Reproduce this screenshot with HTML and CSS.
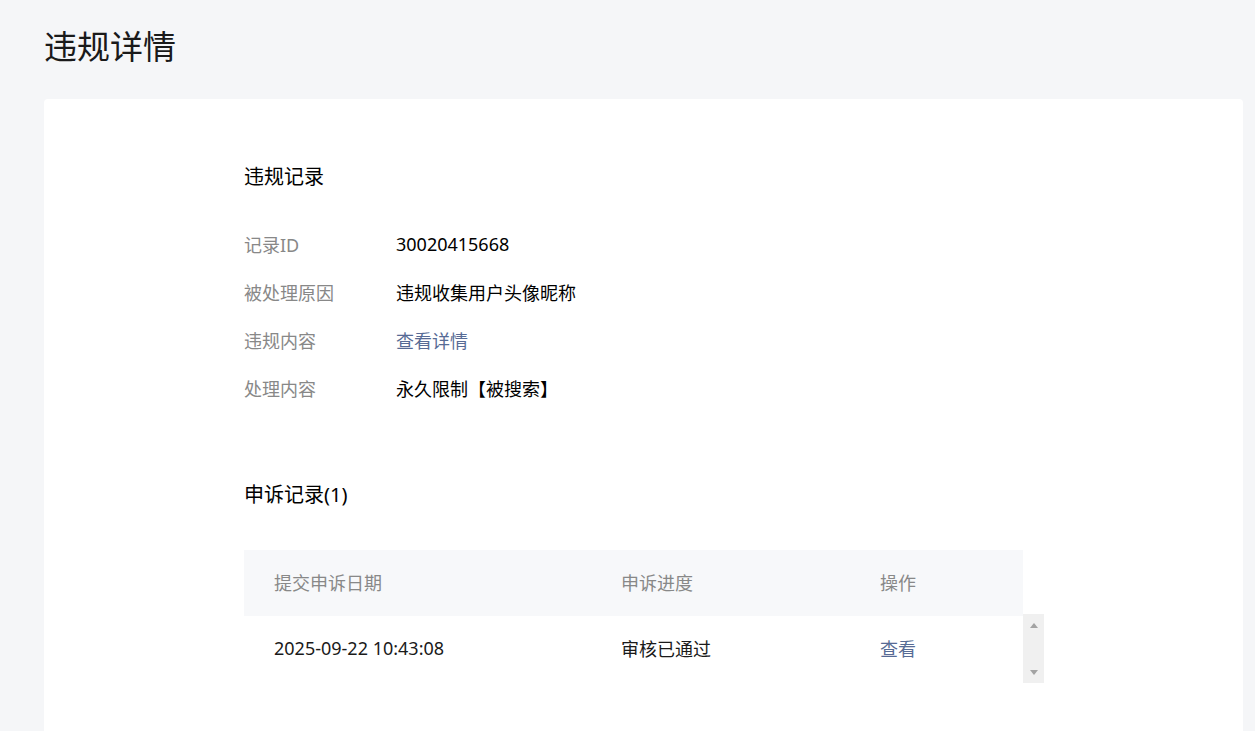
FILE: index.html
```html
<!DOCTYPE html>
<html lang="zh-CN">
<head>
<meta charset="utf-8">
<title>违规详情</title>
<link rel="stylesheet" href="styles.css">
</head>
<body>
<div class="page">
  <h1 class="page-title">违规详情</h1>
  <div class="card">
    <div class="content">
      <h2 class="section-title">违规记录</h2>
      <div class="info-list">
        <div class="info-row"><span class="info-label">记录ID</span><span class="info-value">30020415668</span></div>
        <div class="info-row"><span class="info-label">被处理原因</span><span class="info-value">违规收集用户头像昵称</span></div>
        <div class="info-row"><span class="info-label">违规内容</span><a class="info-value link" href="#">查看详情</a></div>
        <div class="info-row"><span class="info-label">处理内容</span><span class="info-value">永久限制【被搜索】</span></div>
      </div>
      <h2 class="section-title appeal-title">申诉记录(1)</h2>
      <div class="table">
        <div class="table-head">
          <span class="cell">提交申诉日期</span>
          <span class="cell">申诉进度</span>
          <span class="cell">操作</span>
        </div>
        <div class="table-body-wrap">
          <div class="table-body">
            <div class="table-row">
              <span class="cell">2025-09-22 10:43:08</span>
              <span class="cell">审核已通过</span>
              <a class="cell link" href="#">查看</a>
            </div>
          </div>
          <div class="scrollbar">
            <span class="arrow arrow-up"></span>
            <span class="arrow arrow-down"></span>
          </div>
        </div>
      </div>
    </div>
  </div>
</div>
</body>
</html>
```
FILE: styles.css
```css
html, body {
  margin: 0;
  padding: 0;
  background: #f5f6f8;
  height: 100%;
  overflow: hidden;
}
body {
  font-family: "Noto Sans", "Noto Sans CJK SC", sans-serif;
  color: #000;
}
.page {
  padding: 25px 12px 0 44px;
  height: 100%;
  box-sizing: border-box;
  display: flex;
  flex-direction: column;
}
.page-title {
  margin: 0 0 30px 0;
  font-size: 33px;
  line-height: 44px;
  font-weight: 400;
  color: #1a1a1a;
}
.card {
  flex: 1;
  background: #fff;
  border-radius: 4px 4px 0 0;
  padding: 64px 0 0 200px;
}
.content {
  width: 800px;
}
.section-title {
  margin: 0;
  font-size: 20px;
  line-height: 28px;
  font-weight: 400;
  color: #000;
}
.info-list {
  margin-top: 29px;
}
.info-row {
  display: flex;
  height: 48px;
  align-items: center;
  font-size: 18px;
}
.info-label {
  width: 152px;
  color: #888;
}
.info-value {
  color: #000;
}
.link {
  color: #576b95;
  text-decoration: none;
}
.appeal-title {
  margin-top: 69px;
}
.table {
  margin-top: 41px;
  font-size: 18px;
}
.table-head,
.table-row {
  display: grid;
  grid-template-columns: 347px 259px 1fr;
  align-items: center;
  padding-left: 30px;
}
.table-head {
  width: 779px;
  box-sizing: border-box;
  height: 66px;
  padding-bottom: 2px;
  background: #f7f8fa;
  color: #888;
}
.table-body-wrap {
  display: flex;
}
.table-body {
  width: 779px;
}
.table-row {
  height: 67px;
  box-sizing: border-box;
  padding-bottom: 3px;
  color: #1a1a1a;
}
.table-row .link {
  color: #576b95;
}
.scrollbar {
  width: 21px;
  height: 69px;
  margin-top: -2px;
  background: #f0f0f0;
  display: flex;
  flex-direction: column;
  justify-content: space-between;
  align-items: center;
  padding: 9px 0 8px;
  box-sizing: border-box;
}
.arrow {
  width: 0;
  height: 0;
  border-left: 4px solid transparent;
  border-right: 4px solid transparent;
}
.arrow-up {
  border-bottom: 5px solid #a3a3a3;
}
.arrow-down {
  border-top: 5px solid #a3a3a3;
}
```
